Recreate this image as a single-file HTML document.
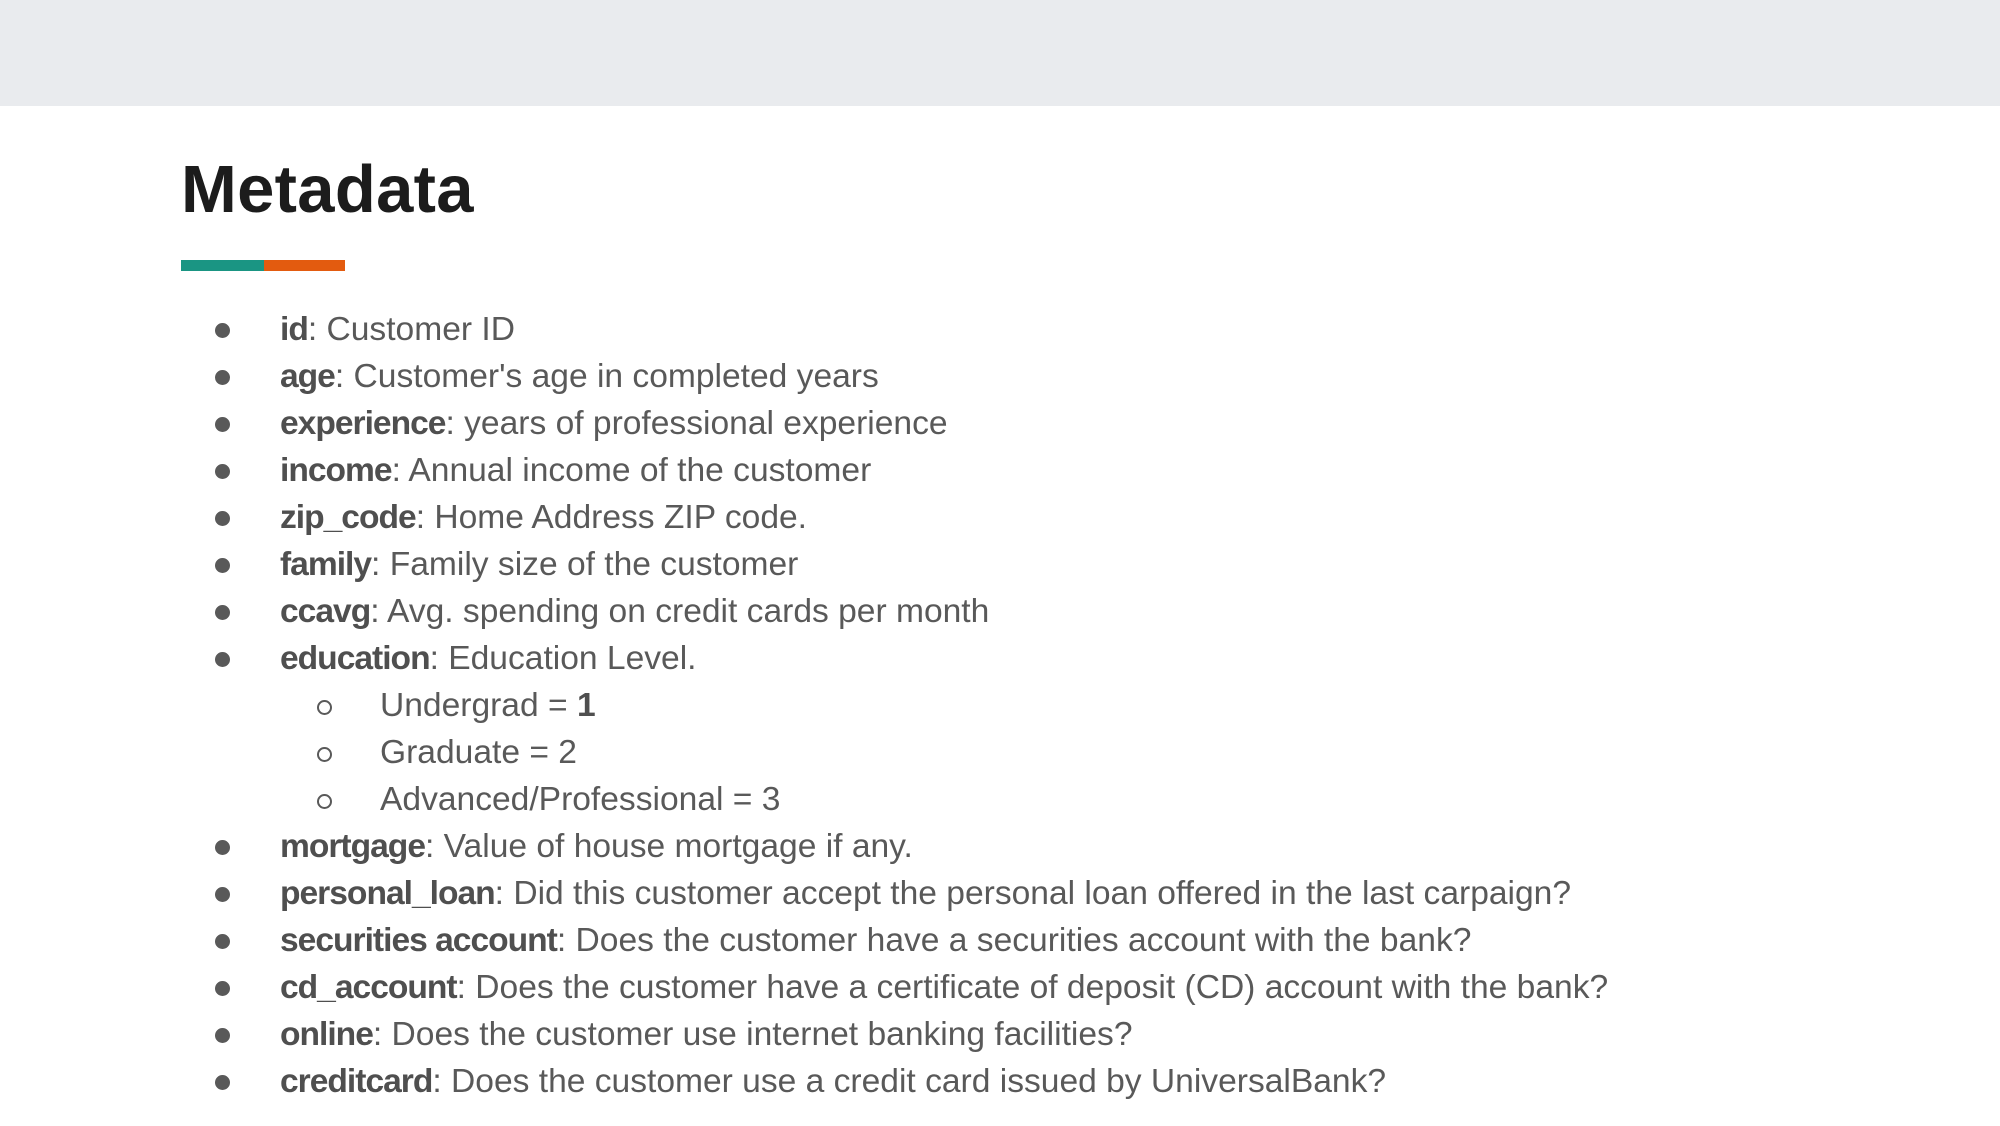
<!DOCTYPE html>
<html><head><meta charset="utf-8"><style>
body{margin:0;width:2000px;height:1126px;background:#fff;position:relative;overflow:hidden;font-family:"Liberation Sans",sans-serif}
.top{position:absolute;left:0;top:0;width:2000px;height:106px;background:#e9ebee}
h1{position:absolute;left:181px;top:150px;margin:0;font-size:67px;line-height:80px;font-weight:bold;color:#1c1c1c;letter-spacing:0.3px}
.b1{position:absolute;left:181px;top:260px;width:83px;height:11px;background:#1a9583}
.b2{position:absolute;left:264px;top:260px;width:81px;height:11px;background:#e35b0f}
ul{position:absolute;left:0;top:306px;margin:0;padding:0;list-style:none;font-size:33.6px;line-height:47px;color:#595959}
li{position:relative;padding-left:280px;white-space:nowrap}
li b{color:#4f4f4f;letter-spacing:-1px}
li:before{content:"";position:absolute;left:215px;top:17px;width:15px;height:15px;border-radius:50%;background:#595959}
li.s{padding-left:380px}
li.s:before{left:317px;top:18px;width:11px;height:11px;background:none;border:2px solid #595959}
</style></head><body>
<div class="top"></div>
<h1>Metadata</h1>
<div class="b1"></div><div class="b2"></div>
<ul>
<li><b>id</b>: Customer ID</li>
<li><b>age</b>: Customer's age in completed years</li>
<li><b>experience</b>: years of professional experience</li>
<li><b>income</b>: Annual income of the customer</li>
<li><b>zip_code</b>: Home Address ZIP code.</li>
<li><b>family</b>: Family size of the customer</li>
<li><b>ccavg</b>: Avg. spending on credit cards per month</li>
<li><b>education</b>: Education Level.</li>
<li class="s">Undergrad = <b>1</b></li>
<li class="s">Graduate = 2</li>
<li class="s">Advanced/Professional = 3</li>
<li><b>mortgage</b>: Value of house mortgage if any.</li>
<li><b>personal_loan</b>: Did this customer accept the personal loan offered in the last carpaign?</li>
<li><b>securities account</b>: Does the customer have a securities account with the bank?</li>
<li><b>cd_account</b>: Does the customer have a certificate of deposit (CD) account with the bank?</li>
<li><b>online</b>: Does the customer use internet banking facilities?</li>
<li><b>creditcard</b>: Does the customer use a credit card issued by UniversalBank?</li>
</ul>
</body></html>
